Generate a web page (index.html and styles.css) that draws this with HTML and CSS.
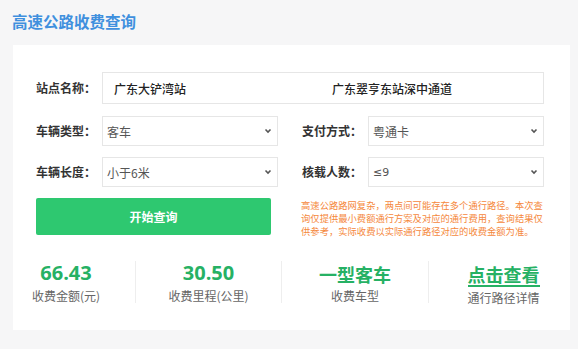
FILE: index.html
```html
<!DOCTYPE html>
<html lang="zh-CN">
<head>
<meta charset="utf-8">
<title>高速公路收费查询</title>
<link rel="stylesheet" href="styles.css">
</head>
<body>
<div class="page">
  <h1 class="title">高速公路收费查询</h1>
  <div class="card">
    <div class="row row-station">
      <span class="label">站点名称：</span>
      <div class="station-box">
        <span class="station station-from">广东大铲湾站</span>
        <span class="station station-to">广东翠亨东站深中通道</span>
      </div>
    </div>
    <div class="row">
      <div class="field">
        <span class="label">车辆类型：</span>
        <div class="select"><span>客车</span><svg class="chev" width="8" height="6" viewBox="0 0 8 6"><polyline points="1.5,1.5 4,4 6.5,1.5" fill="none" stroke="#555" stroke-width="1.6"/></svg></div>
      </div>
      <div class="field">
        <span class="label">支付方式：</span>
        <div class="select"><span>粤通卡</span><svg class="chev" width="8" height="6" viewBox="0 0 8 6"><polyline points="1.5,1.5 4,4 6.5,1.5" fill="none" stroke="#555" stroke-width="1.6"/></svg></div>
      </div>
    </div>
    <div class="row">
      <div class="field">
        <span class="label">车辆长度：</span>
        <div class="select"><span>小于6米</span><svg class="chev" width="8" height="6" viewBox="0 0 8 6"><polyline points="1.5,1.5 4,4 6.5,1.5" fill="none" stroke="#555" stroke-width="1.6"/></svg></div>
      </div>
      <div class="field">
        <span class="label">核载人数：</span>
        <div class="select"><span class="latin">≤9</span><svg class="chev" width="8" height="6" viewBox="0 0 8 6"><polyline points="1.5,1.5 4,4 6.5,1.5" fill="none" stroke="#555" stroke-width="1.6"/></svg></div>
      </div>
    </div>
    <div class="row row-action">
      <button class="btn">开始查询</button>
      <p class="notice">高速公路路网复杂，两点间可能存在多个通行路径。本次查询仅提供最小费额通行方案及对应的通行费用，查询结果仅供参考，实际收费以实际通行路径对应的收费金额为准。</p>
    </div>
    <div class="stats">
      <div class="stat stat-first">
        <div class="value num">66.43</div>
        <div class="caption">收费金额(元)</div>
      </div>
      <div class="stat">
        <div class="value num">30.50</div>
        <div class="caption">收费里程(公里)</div>
      </div>
      <div class="stat">
        <div class="value cjk">一型客车</div>
        <div class="caption">收费车型</div>
      </div>
      <div class="stat stat-last">
        <div class="value cjk"><span class="link">点击查看</span></div>
        <div class="caption">通行路径详情</div>
      </div>
    </div>
  </div>
</div>
</body>
</html>
```
FILE: styles.css
```css
* { box-sizing: border-box; }
html, body { margin: 0; padding: 0; }
body {
  background: #f6f6f7;
  font-family: "Noto Sans CJK SC", "Noto Sans", sans-serif;
  color: #333;
  width: 578px;
  height: 349px;
  overflow: hidden;
}
.page { padding: 11px 8px 0 13px; }
.title {
  margin: 0 0 14px -1px;
  font-size: 15.5px;
  line-height: 20px;
  font-weight: bold;
  color: #3f90de;
}
.card {
  background: #fff;
  width: 557px;
  padding: 27px 26px 27px 23px;
}
.row { display: flex; align-items: center; margin-bottom: 11px; }
.row-station { margin-bottom: 12px; }
.label {
  width: 66px;
  flex: none;
  font-size: 12px;
  line-height: 16px;
  font-weight: bold;
  color: #333;
}
.station-box {
  width: 442px;
  height: 32px;
  border: 1px solid #e6e6e6;
  display: flex;
  align-items: center;
  font-size: 12px;
  color: #222;
  font-weight: 500;
}
.station-from { width: 229px; padding-left: 11px; }
.field { display: flex; align-items: center; width: 242px; }
.field + .field { margin-left: 24px; }
.select {
  width: 176px;
  height: 30px;
  border: 1px solid #e6e6e6;
  display: flex;
  align-items: center;
  justify-content: space-between;
  padding: 0 5px 0 4px;
  font-size: 12px;
  color: #555;
}
.latin { font-family: "DejaVu Sans", "Noto Sans", sans-serif; font-size: 11px; }
.chev { flex: none; }
.row-action { align-items: flex-start; margin-bottom: 0; }
.btn {
  width: 238px;
  height: 37px;
  border: 0;
  border-radius: 2px;
  background: #2ec870;
  color: #fff;
  font-family: "Noto Sans CJK SC", sans-serif;
  font-size: 12px;
  font-weight: bold;
  padding: 0;
}
.notice {
  margin: 1px 0 0 30px;
  width: 246px;
  font-size: 9.3px;
  line-height: 13px;
  color: #f5883c;
}
.stats {
  display: grid;
  grid-template-columns: 122px 146px 147px 142px;
  margin: 23px -26px 0 -23px;
}
.stat {
  text-align: center;
  border-left: 1px solid #eeeeee;
  height: 42px;
}
.stat-first { border-left: 0; padding-right: 16px; }
.stat-last { padding-left: 8px; }
.value {
  font-size: 20px;
  line-height: 24px;
  font-weight: bold;
  color: #26b164;
}
.num { font-family: "Open Sans", "Noto Sans", sans-serif; }
.cjk { font-size: 18px; padding-top: 2px; line-height: 22px; }
.link {
  display: inline-block;
  line-height: 19px;
  border-bottom: 2px solid #26b164;
  padding-bottom: 1px;
}
.caption {
  margin-top: 4px;
  font-size: 12px;
  line-height: 14px;
  color: #666;
}
```
